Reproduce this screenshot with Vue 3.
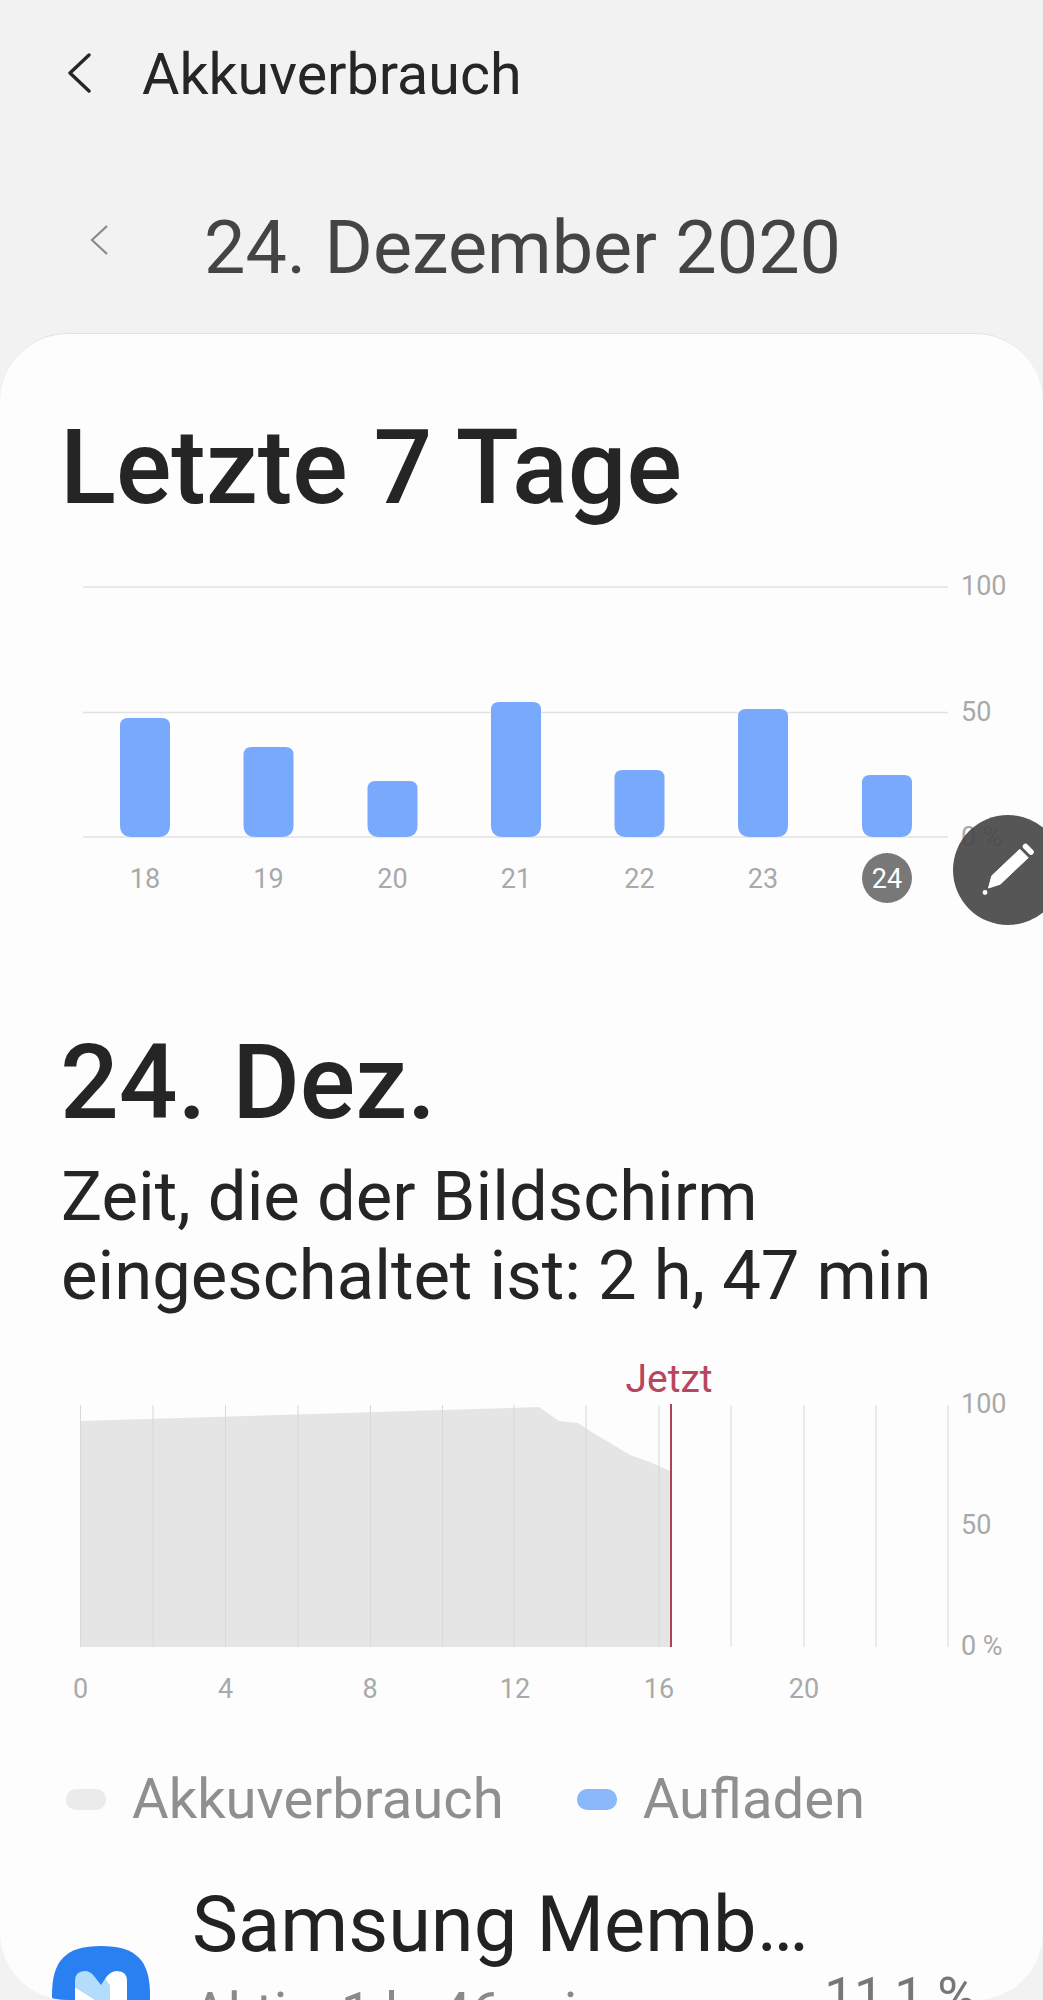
<template>
  <div class="screen">
    <header class="top-bar">
      <svg class="back" width="24" height="40" viewBox="0 0 24 40">
        <path d="M22 2 L3 20 L22 38" fill="none" stroke="#262626" stroke-width="3.4" stroke-linecap="round" stroke-linejoin="round" />
      </svg>
      <h1 class="title">Akkuverbrauch</h1>
    </header>
    <div class="date-row">
      <svg class="prev" width="18" height="30" viewBox="0 0 18 30">
        <path d="M17 1 L2 15 L17 29" fill="none" stroke="#8a8a8a" stroke-width="2.2" />
      </svg>
      <span class="date">24. Dezember 2020</span>
    </div>

    <main class="card">
      <h2 class="heading">Letzte 7 Tage</h2>

      <svg class="chart week" width="1043" height="360" viewBox="0 560 1043 360">
        <line v-for="y in [588, 713.5, 838]" :key="y" x1="83" x2="948" :y1="y" :y2="y" stroke="#e2e2e2" stroke-width="1.5" />
        <text class="axis" x="961" y="596">100</text>
        <text class="axis" x="961" y="722">50</text>
        <text class="axis" x="961" y="847">0 %</text>
        <template v-for="bar in bars" :key="bar.day">
          <path :d="barPath(bar)" fill="#78a9fd" />
          <circle v-if="bar.day === 24" :cx="bar.x" cy="879" r="25" fill="#787878" />
          <text class="axis" :class="{ today: bar.day === 24 }" :x="bar.x" y="889" text-anchor="middle">{{ bar.day }}</text>
        </template>
      </svg>

      <button class="fab">
        <svg width="60" height="60" viewBox="0 0 60 60">
          <path d="M10.5 48 L13.8 35.8 L41.8 9.3 L50.2 17.7 L22.2 44.2 Z" fill="#fff" stroke="#fff" stroke-width="1" stroke-linejoin="round" />
          <circle cx="7" cy="52.5" r="2.4" fill="#fff" />
          <line x1="47.5" y1="6.5" x2="53" y2="12" stroke="#fff" stroke-width="5.5" stroke-linecap="round" />
        </svg>
      </button>

      <h2 class="heading day">24. Dez.</h2>
      <p class="screen-time">Zeit, die der Bildschirm<br />eingeschaltet ist: 2 h, 47 min</p>

      <svg class="chart usage" width="1043" height="360" viewBox="0 1350 1043 360">
        <path d="M80.5 1422 L539 1408 L546 1413 L559 1422 L578 1424 L590 1432 L630 1456 L650 1463 L670 1472 L670 1648 L80.5 1648 Z" fill="#e5e5e5" />
        <line v-for="x in gridX" :key="x" :x1="x" :x2="x" y1="1406" y2="1648" stroke="#d8d8d8" stroke-width="1" />
        <line x1="671" x2="671" y1="1405" y2="1648" stroke="#ae4058" stroke-width="2" />
        <text class="now" x="669" y="1393" text-anchor="middle">Jetzt</text>
        <text class="axis" x="961" y="1414">100</text>
        <text class="axis" x="961" y="1535">50</text>
        <text class="axis" x="961" y="1656">0 %</text>
        <text v-for="tick in ticks" :key="tick.label" class="axis" :x="tick.x" y="1699" text-anchor="middle">{{ tick.label }}</text>
      </svg>

      <div class="legend">
        <span class="swatch grey"></span>
        <span class="legend-label">Akkuverbrauch</span>
        <span class="swatch blue"></span>
        <span class="legend-label">Aufladen</span>
      </div>

      <div class="app-row">
        <svg class="app-icon" width="98" height="98" viewBox="0 0 98 98">
          <path d="M49 0 C84 0 98 14 98 49 C98 84 84 98 49 98 C14 98 0 84 0 49 C0 14 14 0 49 0 Z" fill="#2a7ff1" />
          <path d="M23 41 L23 35 Q23 25 33 25 Q38 25 42 30 L49 39 L53 33 L58 40 L58 98 L42 98 L42 53 Z" fill="#b4dcfb" />
          <path d="M53 33 Q58 25 65 25 Q75 25 75 35 L75 98 L58 98 L58 40 Z" fill="#fff" />
          <path d="M23 41 L42 53 L42 98 L23 98 Z" fill="#fff" />
        </svg>
        <div class="app-text">
          <div class="app-name">Samsung Memb…</div>
          <div class="app-sub">Aktiv: 1 h, 46 min</div>
        </div>
        <div class="app-value">11,1 %</div>
      </div>
    </main>
  </div>
</template>

<script setup>
const barBottom = 838;

const bars = [
  { day: 18, x: 145, top: 719 },
  { day: 19, x: 268.5, top: 748 },
  { day: 20, x: 392.5, top: 782 },
  { day: 21, x: 516, top: 703 },
  { day: 22, x: 639.5, top: 771 },
  { day: 23, x: 763, top: 710 },
  { day: 24, x: 887, top: 776 },
];

const gridX = [80.5, 153, 225.5, 298, 370.5, 442.5, 514, 586, 659, 731, 804, 876, 948];

const ticks = [
  { label: "0", x: 80.5 },
  { label: "4", x: 225.5 },
  { label: "8", x: 370 },
  { label: "12", x: 515 },
  { label: "16", x: 659 },
  { label: "20", x: 804 },
];

// rounded bar, a bit more radius at the foot like the real chart
const barPath = (bar) => {
  const l = bar.x - 25;
  const r = bar.x + 25;
  return `M${l} ${bar.top + 8} Q${l} ${bar.top} ${l + 8} ${bar.top} L${r - 8} ${bar.top} Q${r} ${bar.top} ${r} ${bar.top + 8} L${r} ${barBottom - 12} Q${r} ${barBottom} ${r - 12} ${barBottom} L${l + 12} ${barBottom} Q${l} ${barBottom} ${l} ${barBottom - 12} Z`;
};
</script>

<style>
html,
body {
  margin: 0;
  background: #f2f2f2;
}
</style>

<style scoped>
.screen {
  width: 1043px;
  height: 2000px;
  overflow: hidden;
  background: #f2f2f2;
  font-family: Roboto, "Liberation Sans", sans-serif;
}

.top-bar {
  display: flex;
  align-items: center;
  height: 80px;
  padding: 35px 0 0 67px;
}

.back {
  margin-bottom: 5px;
}

.title {
  margin: 0 0 0 51px;
  font-size: 57.4px;
  font-weight: 400;
  line-height: 80px;
  color: #262626;
}

.date-row {
  display: flex;
  align-items: center;
  height: 90px;
  margin-top: 88px;
  padding-left: 90px;
}

.prev {
  margin-bottom: 16px;
}

.date {
  margin-left: 96px;
  font-size: 73.7px;
  line-height: 90px;
  color: #444;
}

.card {
  position: relative;
  box-sizing: border-box;
  height: 1667px;
  margin-top: 40px;
  overflow: hidden;
  background: #fdfdfd;
  border-top: 1px solid #e2e2e2;
  border-radius: 68px;
}

.heading {
  margin: 0;
  padding: 74px 0 0 60px;
  font-size: 103.5px;
  font-weight: 500;
  line-height: 120px;
  color: #252525;
}

.chart {
  display: block;
}

.week {
  margin-top: 31px;
}

.axis {
  font-family: Roboto, "Liberation Sans", sans-serif;
  font-size: 27px;
  fill: #a9a9a9;
}

.today {
  fill: #fff;
}

.now {
  font-family: Roboto, "Liberation Sans", sans-serif;
  font-size: 39px;
  fill: #b8465e;
}

.fab {
  position: absolute;
  top: 481px;
  left: 953px;
  display: flex;
  align-items: center;
  justify-content: center;
  width: 110px;
  height: 110px;
  padding: 0;
  border: 0;
  border-radius: 50%;
  background: rgba(72, 72, 72, 0.92);
}

.day {
  padding-top: 104px;
}

.screen-time {
  margin: 14px 0 0 61px;
  font-size: 68.8px;
  line-height: 79px;
  color: #252525;
}

.usage {
  margin-top: 34px;
}

.legend {
  display: flex;
  align-items: center;
  height: 70px;
  margin-top: 55px;
  padding-left: 66px;
}

.swatch {
  width: 40px;
  height: 21px;
  border-radius: 10px;
}

.grey {
  background: #ebebeb;
}

.blue {
  margin-left: 73px;
  background: #8ab8fb;
}

.legend-label {
  margin-left: 26px;
  font-size: 56.2px;
  line-height: 70px;
  color: #8f8f8f;
}

.app-row {
  display: flex;
  align-items: flex-start;
  margin-top: 46px;
  padding: 0 67px 0 52px;
}

.app-icon {
  flex: none;
  margin-top: 66px;
}

.app-text {
  margin-left: 42px;
}

.app-name {
  font-size: 77.5px;
  line-height: 90px;
  color: #222;
}

.app-sub {
  margin-top: 13px;
  font-size: 55px;
  line-height: 60px;
  color: #8a8a8a;
}

.app-value {
  margin: 82px 0 0 auto;
  font-size: 53px;
  line-height: 70px;
  color: #777;
  white-space: nowrap;
}
</style>
